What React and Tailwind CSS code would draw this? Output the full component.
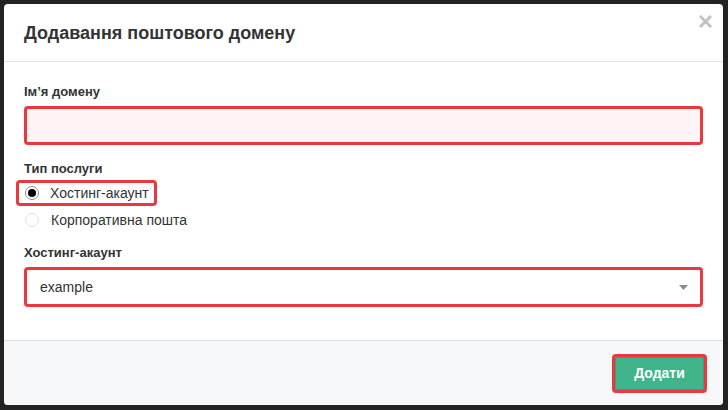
import React from 'react';

const font = { fontFamily: '"Liberation Sans", Arial, sans-serif' };

const App = () => {
  return (
    <div className="w-[728px] h-[410px] bg-[#232323] overflow-hidden" style={font}>
      <div className="ml-[4px] mt-[4px] w-[719px] h-[401px] bg-white rounded-[4px] flex flex-col overflow-hidden text-[#333]">
        {/* Header */}
        <div className="h-[58px] shrink-0 border-b border-[#e3e3e3] flex items-center justify-between pl-[20px] pr-[11px]">
          <h4 className="text-[18px] font-bold leading-none pt-[1px]">Додавання поштового домену</h4>
          <svg width="13" height="13" viewBox="0 0 13 13" className="self-start mt-[11px]">
            <path d="M2 2 L11 11 M11 2 L2 11" stroke="#c2c2c2" strokeWidth="3" strokeLinecap="square" />
          </svg>
        </div>

        {/* Body */}
        <div className="flex-1 px-[20px] pt-[21px]">
          <div className="text-[13px] font-bold leading-[18px] mb-[5px]">Ім’я домену</div>
          <div className="h-[39px] border-[3px] border-[#e9393e] rounded-[4px] bg-[#fef4f3]" />

          <div className="text-[13px] font-bold leading-[18px] mt-[15px]">Тип послуги</div>
          <div className="mt-[2px] -ml-[8px] w-[141px] h-[26px] border-[3px] border-[#e9393e] rounded-[4px] flex items-center pl-[6px] gap-[11px]">
            <span className="w-[14px] h-[14px] rounded-full border border-[#8f8f8f] flex items-center justify-center">
              <span className="w-[8px] h-[8px] rounded-full bg-black" />
            </span>
            <span className="text-[14px] leading-none">Хостинг-акаунт</span>
          </div>
          <div className="h-[28px] flex items-center pl-[1px] gap-[12px]">
            <span className="w-[14px] h-[14px] rounded-full border border-[#e2e2e2]" />
            <span className="text-[14px] leading-none">Корпоративна пошта</span>
          </div>

          <div className="text-[13px] font-bold leading-[18px] mt-[10px] mb-[5px]">Хостинг-акаунт</div>
          <div className="h-[40px] border-[3px] border-[#e9393e] rounded-[4px] bg-white flex items-center justify-between pl-[13px] pr-[12px]">
            <span className="text-[14px] leading-none">example</span>
            <svg width="9" height="5" viewBox="0 0 9 5">
              <path d="M0 0 L9 0 L4.5 5 Z" fill="#8a8a8a" />
            </svg>
          </div>
        </div>

        {/* Footer */}
        <div className="h-[65px] shrink-0 border-t border-[#dedede] bg-[#f7f8fa] flex items-center justify-end pr-[16px]">
          <div className="w-[95px] h-[39px] border-[3px] border-[#e9393e] rounded-[4px] flex">
            <button className="flex-1 bg-[#40b58c] border border-[#37a07b] text-white text-[14px] font-bold">
              Додати
            </button>
          </div>
        </div>
      </div>
    </div>
  );
};

export default App;
